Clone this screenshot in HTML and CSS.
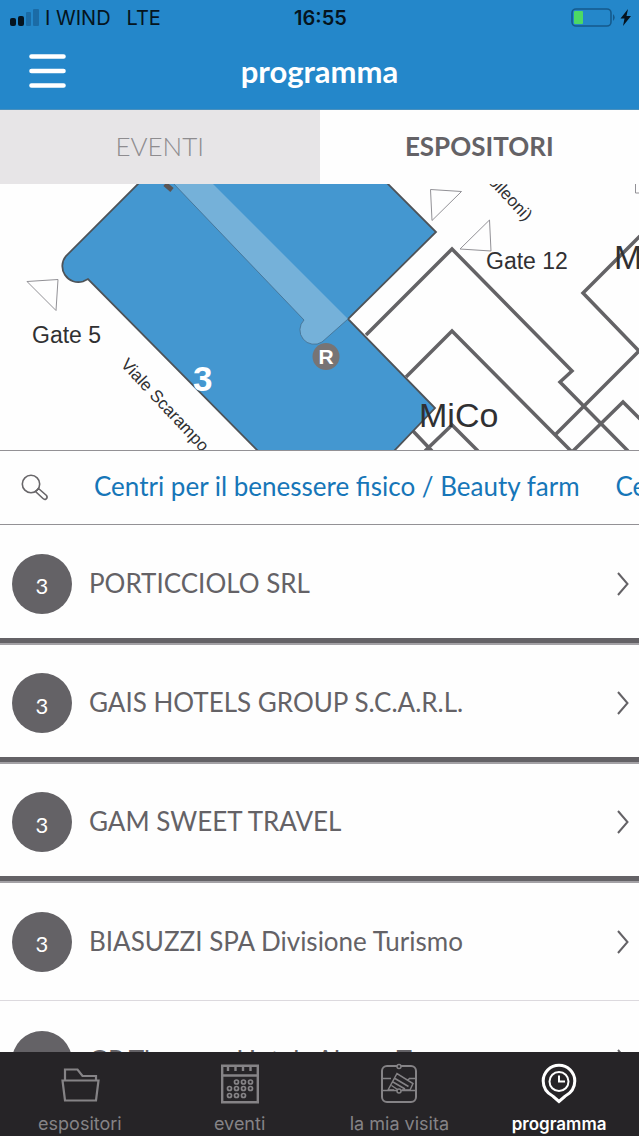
FILE: index.html
```
<!DOCTYPE html>
<html lang="it">
<head>
<meta charset="utf-8">
<meta name="viewport" content="width=device-width, initial-scale=1">
<title>programma</title>
<link rel="stylesheet" href="styles.css">
</head>
<body>
<header class="header">
  <div class="status">
    <div class="status-left">
      <svg class="signal" width="29" height="18" viewBox="0 0 29 18" aria-hidden="true">
        <rect x="0" y="9" width="6" height="8" rx="2" fill="#051420"/>
        <rect x="8" y="7" width="6" height="10" rx="2" fill="#051420"/>
        <rect x="16" y="3" width="5" height="14" rx="1" fill="#1b6ba6"/>
        <rect x="23" y="0" width="6" height="17" rx="1" fill="#1b6ba6"/>
      </svg>
      <span>I WIND</span><span class="network">LTE</span>
    </div>
    <span class="clock">16:55</span>
    <svg class="battery" width="62" height="22" viewBox="0 0 62 22" aria-hidden="true">
      <rect x="3" y="2" width="39" height="17" rx="4" fill="none" stroke="#155a8c" stroke-width="1.600"/>
      <rect x="5" y="4" width="9" height="13" rx="1" fill="#4cd964"/>
      <path d="M44 7q3.500 3.500 0 7z" fill="#155a8c"/>
      <path d="M59 2l-7.500 9.500h4l-1.500 7.500 8-10h-4.500z" fill="#051420"/>
    </svg>
  </div>
  <div class="title-bar">
    <button class="menu" type="button" aria-label="Menu">
      <svg width="38" height="34" viewBox="0 0 38 34" aria-hidden="true">
        <path d="M3.500 2.500h32M3.500 17h32M3.500 31.500h32" stroke="#fff" stroke-width="4.600" stroke-linecap="round"/>
      </svg>
    </button>
    <h1 class="title">programma</h1>
  </div>
</header>

<nav class="tabs">
  <button class="tab" type="button">EVENTI</button>
  <button class="tab tab-active" type="button" aria-current="true">ESPOSITORI</button>
</nav>

<svg class="map" viewBox="0 184 639 266" preserveAspectRatio="xMidYMid slice" role="img" aria-label="Mappa dei padiglioni">
  <g fill="none" stroke="#646366" stroke-width="3.500">
    <path d="M366 335l86-86 120 122-12 11 68 69"/>
    <path d="M406 377l46-46 119 120"/>
    <path d="M640 236l-57 57 56 58-84 84"/>
    <path d="M573 451l50-49 17 17"/>
    <path d="M413 431l19 20M425 451l27-26 26 26"/>
  </g>
  <g fill="none" stroke="#929196" stroke-width="1">
    <path d="M27 281.500l31-2-2 31zM430.500 189.500l31 2-29.500 29zM489.500 220l1.500 31-31-2zM635.500 183v10h5"/>
  </g>
  <path d="M139 183L66 256A16 16 0 0 0 83 281.500L88 279 258 451H394L435 408 348 319 436 232 387 183z" fill="#4497d0" stroke="#4e5358" stroke-width="1.800"/>
  <path d="M173 183L304 320A14.300 14.300 0 0 0 322 342L348 319 212 183z" fill="#75b1d9"/>
  <path d="M173 183L304 320A14.300 14.300 0 0 0 322 342L348 319" fill="none" stroke="#426d8e" stroke-width="0.800"/>
  <path d="M165 184l7 6" stroke="#5b5554" stroke-width="5"/>
  <circle cx="326" cy="356.500" r="13.500" fill="#777475"/>
  <g class="map-text">
    <text x="326" y="364" class="map-restaurant">R</text>
    <text x="193" y="391" class="map-pavilion">3</text>
    <text x="32" y="343" class="map-gate">Gate 5</text>
    <text x="486" y="269" class="map-gate">Gate 12</text>
    <text x="419" y="427" class="map-hall">MiCo</text>
    <text x="614" y="269" class="map-hall">MiCo</text>
    <text transform="translate(120 365) rotate(47)" class="map-street">Viale Scarampo</text>
    <text transform="translate(525 222) rotate(47)" class="map-street map-street-end">(Viale Colleoni)</text>
  </g>
</svg>

<div class="filter">
  <button class="search" type="button" aria-label="Cerca">
    <svg width="28" height="28" viewBox="0 0 28 28" fill="none" stroke="#686669" stroke-width="1.600" aria-hidden="true">
      <circle cx="10" cy="10" r="8.700"/>
      <path d="M14.500 17.500l3-3 8 7q1.500 2-.5 3.500-1.500 1-3-.5z"/>
    </svg>
  </button>
  <div class="categories">
    <a href="#benessere">Centri per il benessere fisico / Beauty farm</a>
    <a href="#congressi">Centri congressi</a>
  </div>
</div>

<main class="list-wrap">
  <ul class="list">
    <li><a class="row" href="#e1"><span class="badge">3</span><span class="name">PORTICCIOLO SRL</span><svg class="chevron" viewBox="0 0 12 24"><path d="M1 1l9.500 11L1 23"/></svg></a></li>
    <li><a class="row" href="#e2"><span class="badge">3</span><span class="name">GAIS HOTELS GROUP S.C.A.R.L.</span><svg class="chevron" viewBox="0 0 12 24"><path d="M1 1l9.500 11L1 23"/></svg></a></li>
    <li><a class="row" href="#e3"><span class="badge">3</span><span class="name">GAM SWEET TRAVEL</span><svg class="chevron" viewBox="0 0 12 24"><path d="M1 1l9.500 11L1 23"/></svg></a></li>
    <li><a class="row row-thin" href="#e4"><span class="badge">3</span><span class="name">BIASUZZI SPA Divisione Turismo</span><svg class="chevron" viewBox="0 0 12 24"><path d="M1 1l9.500 11L1 23"/></svg></a></li>
    <li><a class="row row-plain" href="#e5"><span class="badge">3</span><span class="name">GP Thermae Hotels Abano Terme</span><svg class="chevron" viewBox="0 0 12 24"><path d="M1 1l9.500 11L1 23"/></svg></a></li>
  </ul>
</main>

<nav class="bottom">
  <a class="bottom-item" href="#espositori">
    <svg width="40" height="42" viewBox="0 0 40 42" fill="none" stroke="currentColor" stroke-width="2.200" aria-hidden="true">
      <path d="M5 17V6.500h12.500l5 6.500H36v4"/><path d="M2.500 17.500h36L36 37.500H5z"/>
    </svg>
    <span>espositori</span>
  </a>
  <a class="bottom-item" href="#eventi">
    <svg width="40" height="42" viewBox="0 0 40 42" fill="none" stroke="currentColor" aria-hidden="true">
      <path stroke-width="2.400" d="M2.200 2.700h35.600v36.600H2.200zM2.200 12.500h35.600M8 3v5M15.500 3v5M23 3v5M30.500 3v5"/>
      <g stroke-width="1.700"><circle cx="16.500" cy="19" r="2"/><circle cx="23.500" cy="19" r="2"/><circle cx="30.500" cy="19" r="2"/><circle cx="9.500" cy="25.500" r="2"/><circle cx="16.500" cy="25.500" r="2"/><circle cx="23.500" cy="25.500" r="2"/><circle cx="30.500" cy="25.500" r="2"/><circle cx="9.500" cy="32.500" r="2"/><circle cx="16.500" cy="32.500" r="2"/><circle cx="23.500" cy="32.500" r="2"/></g>
    </svg>
    <span>eventi</span>
  </a>
  <a class="bottom-item" href="#visita">
    <svg width="40" height="42" viewBox="0 0 40 42" fill="none" stroke="currentColor" stroke-width="1.500" aria-hidden="true">
      <rect x="3" y="3" width="34" height="36" rx="5" stroke-width="2"/>
      <path d="M3 15.500h9M31 15.500h6M3 27.500h15M22 27.500h15"/>
      <path d="M9 27l9-16.500 16 10-3 6.500M9 27h6M23 27h8M16 15.500l13.500 8M14 19l12 7M12.500 22.500l6 4M31 15l-2 2"/>
      <circle cx="20" cy="3.500" r="2" fill="#262427"/><circle cx="20" cy="28" r="2" fill="#262427"/>
    </svg>
    <span>la mia visita</span>
  </a>
  <a class="bottom-item bottom-active" href="#programma" aria-current="page">
    <svg width="40" height="42" viewBox="0 0 40 42" fill="none" stroke="currentColor" aria-hidden="true">
      <path stroke-width="3" d="M20 38.500L14 33.300C7 29.500 4.200 25 4.200 18a15.800 15.800 0 0 1 31.600 0c0 7-2.800 11.500-9.800 15.300z"/>
      <circle cx="20" cy="18.500" r="9.500" stroke-width="2"/><path stroke-width="2" d="M20 12.500v6h6"/>
    </svg>
    <span>programma</span>
  </a>
</nav>
</body>
</html>
```
FILE: styles.css
```
* { box-sizing: border-box; }

body {
  margin: 0;
  height: 100vh;
  display: flex;
  flex-direction: column;
  overflow: hidden;
  background: #fefefe;
  color: #646266;
  font-family: Lato, "Open Sans", sans-serif;
}

button {
  border: 0;
  padding: 0;
  background: none;
  color: inherit;
  font: inherit;
}

a { color: inherit; text-decoration: none; }

svg { flex: none; display: block; }

/* Header */
.header {
  flex: none;
  background: #2487ca;
  border-bottom: 1px solid #4a90bd;
}

.status {
  display: grid;
  grid-template-columns: 1fr auto 1fr;
  align-items: center;
  height: 36px;
  padding: 0 8px 0 10px;
  color: #051420;
  font: 20px/36px Inter, "Liberation Sans", sans-serif;
}

.status-left { display: flex; align-items: center; gap: 6px; }
.network { margin-left: 10px; }
.clock { font-weight: 600; }
.battery { justify-self: end; }

.title-bar {
  display: grid;
  grid-template-columns: 1fr auto 1fr;
  align-items: center;
  height: 73px;
  padding: 0 28px 4px;
}

.menu { justify-self: start; }

.title {
  margin: 0;
  color: #fff;
  font-size: 31px;
  line-height: 40px;
  font-weight: 700;
}

/* Tabs */
.tabs { flex: none; display: flex; height: 74px; }

.tab {
  flex: 1;
  padding-bottom: 3px;
  background: #e7e5e7;
  color: #8e8c8f;
  font-size: 26px;
  font-weight: 300;
}

.tab-active { background: #fefefe; color: #646266; font-weight: 700; }

/* Map */
.map { width: 100%; height: 266px; overflow: hidden; }
.map-text { font-family: "Liberation Sans", Arial, sans-serif; fill: #303032; }
.map-gate { font-size: 23px; }
.map-hall { font-size: 34px; }
.map-street { font-size: 17px; }
.map-street-end { text-anchor: end; }
.map-pavilion { font-size: 35px; font-weight: 700; fill: #fff; }
.map-restaurant { font-size: 21px; font-weight: 700; fill: #fff; text-anchor: middle; }

/* Category filter */
.filter {
  flex: none;
  display: flex;
  align-items: center;
  height: 75px;
  border-top: 1px solid #939195;
  border-bottom: 1px solid #939195;
}

.search { flex: none; padding: 0 45px 0 21px; }

.categories {
  display: flex;
  gap: 36px;
  padding-bottom: 3px;
  overflow: hidden;
  color: #1676b8;
  font-size: 26px;
  white-space: nowrap;
}

/* Exhibitors */
.list-wrap { flex: 1; min-height: 0; overflow: hidden; }
.list { margin: 0; padding: 0; list-style: none; }

.row {
  display: flex;
  align-items: center;
  gap: 17px;
  height: 119px;
  padding: 4px 10px 0 12px;
  border-top: 2px solid #a3a1a5;
  border-bottom: 5px solid #646266;
}

li:first-child .row { height: 118px; border-top: 0; }
.row-thin { height: 120px; padding-top: 0; border-bottom: 1px solid #dcd9de; }
.row-plain { padding-top: 0; border: 0; }

.badge {
  flex: none;
  display: grid;
  place-items: center;
  width: 60px;
  height: 60px;
  padding-top: 4px;
  border-radius: 50%;
  background: #646266;
  color: #fff;
  font-size: 22px;
}

.name {
  flex: 1;
  min-width: 0;
  padding-bottom: 2px;
  overflow: hidden;
  font-size: 26px;
  line-height: 36px;
  white-space: nowrap;
}

.chevron {
  width: 12px;
  height: 24px;
  fill: none;
  stroke: #646266;
  stroke-width: 2;
}

/* Bottom navigation */
.bottom {
  flex: none;
  display: flex;
  height: 84px;
  background: #262427;
  color: #858386;
  font: 18px/22px Inter, "Liberation Sans", sans-serif;
}

.bottom-item {
  flex: 1;
  display: flex;
  flex-direction: column;
  align-items: center;
  justify-content: flex-end;
  gap: 8px;
  padding-bottom: 1px;
}

.bottom-active { color: #fff; font-size: 17px; font-weight: 600; }
```
